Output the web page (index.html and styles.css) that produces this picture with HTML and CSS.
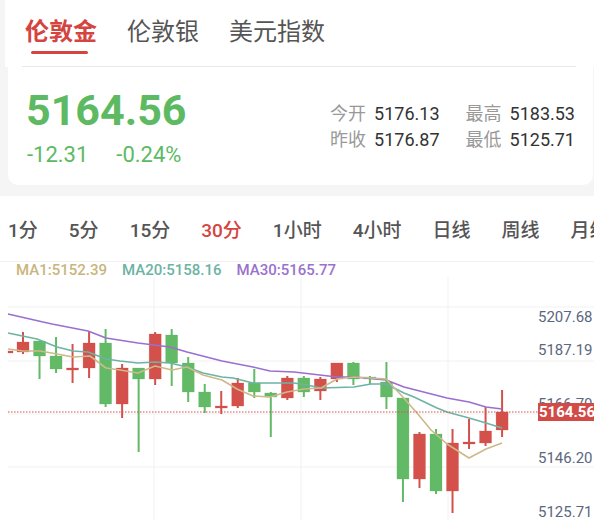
FILE: index.html
```html
<!DOCTYPE html>
<html lang="zh-CN">
    <head>
        <meta charset="utf-8">
        <link rel="stylesheet" href="styles.css">
    </head>
    <body>
        <div class="header">
            <div class="tabs">
                <span class="tab active">伦敦金</span>
                <span class="tab">伦敦银</span>
                <span class="tab">美元指数</span>
            </div>
        </div>

        <div class="quote">
            <div class="price-box">
                <div class="price">5164.56</div>
                <div class="change">
                    <span>-12.31</span>
                    <span>-0.24%</span>
                </div>
            </div>
            <div class="stats">
                <div class="stat"><span class="label">今开</span><span class="value">5176.13</span></div>
                <div class="stat"><span class="label">最高</span><span class="value">5183.53</span></div>
                <div class="stat"><span class="label">昨收</span><span class="value">5176.87</span></div>
                <div class="stat"><span class="label">最低</span><span class="value">5125.71</span></div>
            </div>
        </div>

        <div class="chart-box">
            <div class="periods">
                <span>1分</span>
                <span>5分</span>
                <span>15分</span>
                <span class="on">30分</span>
                <span>1小时</span>
                <span>4小时</span>
                <span>日线</span>
                <span>周线</span>
                <span>月线</span>
            </div>
            <div class="legend">
                <span class="ma1">MA1:5152.39</span>
                <span class="ma20">MA20:5158.16</span>
                <span class="ma30">MA30:5165.77</span>
            </div>
            <svg id="kline" class="kline" width="594" height="243" viewBox="0 277 594 243">
                <g class="grid">
                    <line x1="8" y1="307" x2="594" y2="307"/>
                    <line x1="8" y1="361" x2="594" y2="361"/>
                    <line x1="8" y1="414" x2="594" y2="414"/>
                    <line x1="8" y1="467" x2="594" y2="467"/>
                    <line x1="154" y1="277" x2="154" y2="520"/>
                    <line x1="301" y1="277" x2="301" y2="520"/>
                    <line x1="448" y1="277" x2="448" y2="520"/>
                </g>
                <g class="axis">
                    <text x="538" y="322">5207.68</text>
                    <text x="538" y="355">5187.19</text>
                    <text x="538" y="409">5166.70</text>
                    <text x="538" y="463">5146.20</text>
                    <text x="538" y="517">5125.71</text>
                </g>
                <g id="candles"></g>
                <g id="lines"></g>
                <line class="last-line" x1="8" y1="412" x2="538" y2="412"/>
                <rect class="last-tag" x="538" y="403" width="56" height="18"/>
                <text class="last-text" x="539" y="417">5164.56</text>
            </svg>
        </div>

        <script>
            var NS = "http://www.w3.org/2000/svg";
            var $ = function(id){
                return document.getElementById(id);
            };
            function make(tag, attrs, parent){
                var el = document.createElementNS(NS, tag);
                for(var k in attrs){
                    el.setAttribute(k, attrs[k]);
                }
                parent.appendChild(el);
                return el;
            }

            // r = 涨, g = 跌 : [类型, 实体上, 实体下, 最高, 最低] (像素)
            var bars = [
                ["r", 342, 352, 332, 354],
                ["g", 341, 356, 341, 379],
                ["g", 356, 369, 337, 373],
                ["r", 368, 370, 344, 383],
                ["r", 343, 368, 332, 378],
                ["g", 343, 404, 329, 407],
                ["r", 368, 404, 364, 418],
                ["g", 368, 379, 368, 452],
                ["r", 334, 379, 332, 385],
                ["g", 335, 363, 329, 386],
                ["g", 363, 392, 357, 402],
                ["g", 392, 407, 384, 413],
                ["r", 406, 408, 391, 414],
                ["r", 383, 406, 378, 408],
                ["g", 383, 392, 369, 398],
                ["g", 393, 397, 392, 437],
                ["r", 378, 398, 376, 400],
                ["g", 378, 392, 376, 397],
                ["r", 379, 391, 377, 400],
                ["r", 363, 379, 363, 382],
                ["g", 363, 379, 362, 385],
                ["g", 377, 379, 376, 384],
                ["g", 382, 397, 362, 409],
                ["g", 398, 479, 398, 502],
                ["r", 434, 479, 432, 488],
                ["g", 434, 491, 429, 494],
                ["r", 443, 491, 429, 513],
                ["r", 442, 444, 419, 449],
                ["r", 431, 443, 407, 446],
                ["r", 412, 430, 390, 437]
            ];

            var candles = $("candles");
            // 左边被截掉的一根
            make("rect", {x: 8, y: 351, width: 5, height: 2, "class": "up"}, candles);
            for(var i = 0; i < bars.length; i++){
                var b = bars[i];
                var cx = 23 + i * 16.52;
                var cls = b[0] == "r" ? "up" : "down";
                make("line", {x1: cx, y1: b[3], x2: cx, y2: b[4], "class": "wick " + cls}, candles);
                make("rect", {x: cx - 6, y: b[1], width: 12, height: Math.max(b[2] - b[1], 2), "class": cls}, candles);
            }

            var ma = {
                ma30: [[8,314],[43,322],[52,324],[88,331],[106,338],[138,343],[170,347],[187,352],[222,361],[253,367],[270,371],[294,372],[337,377],[354,377],[386,380],[404,387],[447,398],[469,402],[486,407],[502,409]],
                ma20: [[8,333],[37,339],[57,347],[73,351],[88,352],[106,359],[120,361],[138,363],[155,362],[170,363],[187,367],[203,373],[222,377],[233,378],[253,383],[270,383],[294,383],[307,385],[321,388],[354,387],[371,384],[386,384],[404,393],[414,397],[437,408],[447,412],[469,418],[486,423],[502,428]],
                ma1: [[8,349],[23,351],[40,351],[57,354],[73,357],[90,356],[106,368],[120,370],[138,373],[155,366],[172,370],[187,367],[203,375],[222,380],[237,389],[253,396],[270,397],[287,392],[304,389],[321,388],[337,379],[354,377],[371,378],[386,379],[401,395],[417,413],[431,430],[447,444],[469,458],[486,449],[502,443]]
            };
            var lines = $("lines");
            for(var name in ma){
                make("polyline", {points: ma[name].join(" "), "class": "line-" + name}, lines);
            }
        </script>
    </body>
</html>
```

FILE: styles.css
```css
*{
	margin: 0;
	padding: 0;
	box-sizing: border-box;
}
body{
	width: 594px;
	background: #f5f5f5;
	font-family: Roboto, "Noto Sans CJK SC", sans-serif;
	color: #333;
	overflow: hidden;
}

/* 顶部品种切换 */
.header{
	margin-left: 5px;
	background: #fff;
}
.tabs{
	display: flex;
	gap: 30px;
	height: 67px;
	margin: 0 18px 0 17px;
	padding-left: 3px;
	border-bottom: 1px solid #e8e8e8;
}
.tab{
	padding-top: 18px;
	font-size: 24px;
	line-height: 28px;
	color: #555;
}
.tab.active{
	color: #d4453f;
	font-weight: bold;
}
.tab.active::after{
	content: "";
	display: block;
	width: 57px;
	height: 3px;
	margin: 5px 0 0 6px;
	border-radius: 2px;
	background: #d4453f;
}

/* 报价卡片 */
.quote{
	display: flex;
	justify-content: space-between;
	height: 118px;
	margin: 0 1px 0 8px;
	padding: 22px 18px 0 18px;
	background: #fff;
	border-radius: 0 0 10px 10px;
}
.price{
	font-size: 43px;
	line-height: 43px;
	font-weight: bold;
	color: #5dba63;
}
.change{
	display: flex;
	gap: 28px;
	margin-top: 12px;
	padding-left: 1px;
	font-size: 22px;
	line-height: 22px;
	color: #5dba63;
}
.stats{
	display: grid;
	grid-template-columns: auto auto;
	column-gap: 26px;
	row-gap: 8px;
	margin-top: 16px;
	align-self: flex-start;
}
.stat{
	display: flex;
	gap: 8px;
	font-size: 18px;
	line-height: 18px;
}
.stat .label{
	color: #999;
}
.stat .value{
	color: #333;
}

/* K线区域 */
.chart-box{
	margin-top: 11px;
	background: #fff;
}
.periods{
	display: flex;
	align-items: center;
	gap: 31px;
	height: 66px;
	padding-left: 8px;
	border-bottom: 1px solid #f2f2f2;
	font-size: 19px;
	font-weight: 500;
	color: #555;
	white-space: nowrap;
	overflow: hidden;
}
.periods .on{
	color: #d4453f;
}
.legend{
	display: flex;
	gap: 15px;
	height: 15px;
	padding: 1px 0 0 16px;
	font-size: 15px;
	line-height: 14px;
	font-weight: 500;
}
.ma1{
	color: #c9b57e;
}
.ma20{
	color: #6db3a4;
}
.ma30{
	color: #9a72cd;
}
.kline{
	display: block;
}
.grid line{
	stroke: #f1f1f1;
	stroke-width: 1;
}
.axis text{
	font-family: Roboto, sans-serif;
	font-size: 15px;
	fill: #5b6780;
}
.up{
	fill: #d4504b;
	stroke: #d4504b;
}
.down{
	fill: #62b966;
	stroke: #62b966;
}
rect.up, rect.down{
	stroke-width: 0.5;
	stroke-opacity: 0.5;
}
.wick{
	stroke-width: 2;
}
#lines polyline{
	fill: none;
	stroke-width: 1.6;
	stroke-linejoin: round;
}
.line-ma30{
	stroke: #9a6fd0;
}
.line-ma20{
	stroke: #6db3a5;
}
.line-ma1{
	stroke: #cdb98a;
}
.last-line{
	stroke: #d4504b;
	stroke-width: 1;
	stroke-dasharray: 1.5 1.5;
}
.last-tag{
	fill: #d24b47;
}
.last-text{
	font-family: Roboto, sans-serif;
	font-size: 15px;
	font-weight: bold;
	fill: #fff;
}
```
